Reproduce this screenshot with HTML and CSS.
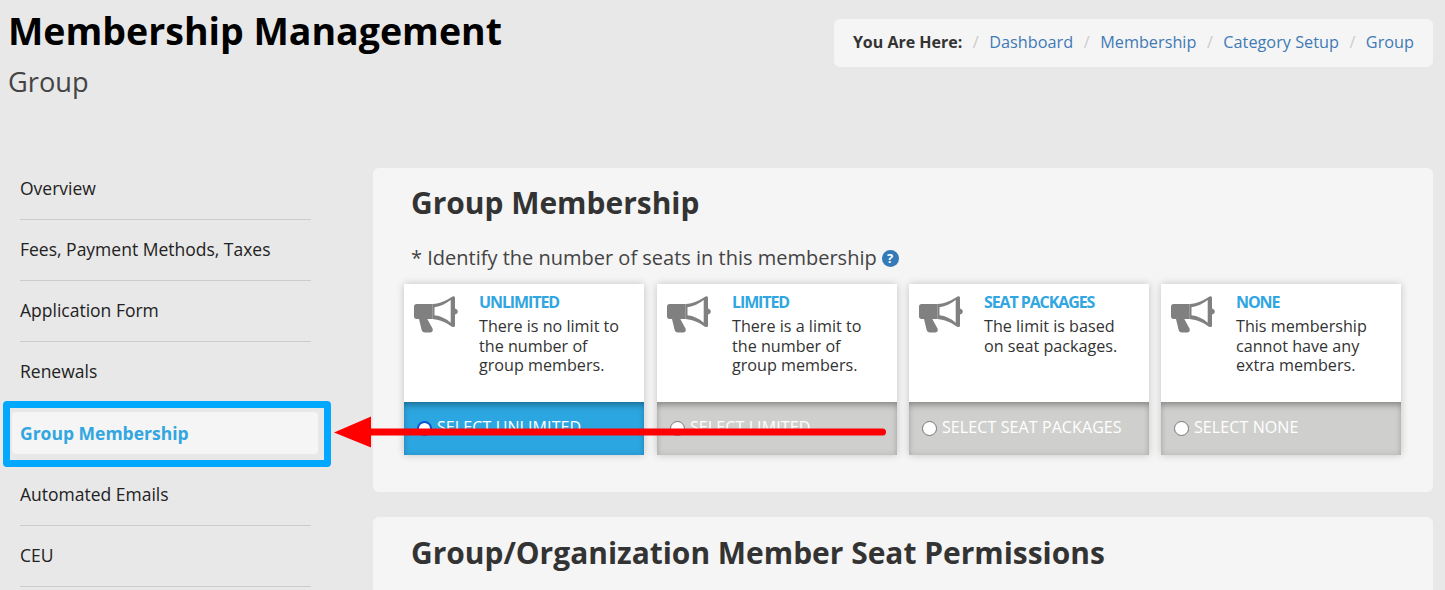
FILE: index.html
```html
<!DOCTYPE html>
<html lang="en">
<head>
  <meta charset="UTF-8">
  <meta name="viewport" content="width=device-width, initial-scale=1.0">
  <title>Membership Management - Group</title>
  <link rel="stylesheet" href="styles.css">
</head>
<body>

  <svg width="0" height="0" class="defs">
    <symbol id="megaphone" viewBox="0 0 44 38">
      <path fill="#808080" d="M2.500 8H18.700V23H13.300L18.500 32.500C19.500 35 18 36.500 15.500 36.500H11C9 36.500 8 35.500 7.500 33.500L5 23H2.500C1 23 0 22 0 20.500V10.500C0 9 1 8 2.500 8z"/>
      <path fill="#808080" fill-rule="evenodd" d="M18.700 8C26 7.500 33 4.500 38 .8C39.500 -.2 41 .3 41 2V12.500C42.800 13 43.800 14 43.800 15.500C43.800 17 42.800 18 41 18.500V29.500C41 31 39.500 31.500 38 30.800C33 27 26 23.800 18.700 23zM20.500 11.300V19.300C26.500 20 32 22.500 36.700 26.700V4C32 7.500 26.500 10.500 20.500 11.300z"/>
    </symbol>
  </svg>

  <header class="page-head">
    <div class="titles">
      <h1>Membership Management</h1>
      <h2>Group</h2>
    </div>
    <nav class="breadcrumb">
      <strong>You Are Here:</strong>
      <span class="sep">/</span><a href="#">Dashboard</a>
      <span class="sep">/</span><a href="#">Membership</a>
      <span class="sep">/</span><a href="#">Category Setup</a>
      <span class="sep">/</span><a href="#">Group</a>
    </nav>
  </header>

  <div class="layout">
    <ul class="side-nav">
      <li><a href="#">Overview</a></li>
      <li><a href="#">Fees, Payment Methods, Taxes</a></li>
      <li><a href="#">Application Form</a></li>
      <li><a href="#">Renewals</a></li>
      <li class="active"><a href="#">Group Membership</a></li>
      <li><a href="#">Automated Emails</a></li>
      <li><a href="#">CEU</a></li>
    </ul>

    <main class="content">
      <section class="panel">
        <h3>Group Membership</h3>
        <p class="question">* Identify the number of seats in this membership
          <span class="help">?</span>
        </p>
        <div class="cards">
          <div class="card selected">
            <div class="card-body">
              <svg class="card-icon"><use href="#megaphone"/></svg>
              <div class="card-text">
                <h4>UNLIMITED</h4>
                <p>There is no limit to the number of group members.</p>
              </div>
            </div>
            <label class="card-foot"><span class="radio"></span>SELECT UNLIMITED</label>
          </div>
          <div class="card">
            <div class="card-body">
              <svg class="card-icon"><use href="#megaphone"/></svg>
              <div class="card-text">
                <h4>LIMITED</h4>
                <p>There is a limit to the number of group members.</p>
              </div>
            </div>
            <label class="card-foot"><span class="radio"></span>SELECT LIMITED</label>
          </div>
          <div class="card">
            <div class="card-body">
              <svg class="card-icon"><use href="#megaphone"/></svg>
              <div class="card-text">
                <h4>SEAT PACKAGES</h4>
                <p>The limit is based on seat packages.</p>
              </div>
            </div>
            <label class="card-foot"><span class="radio"></span>SELECT SEAT PACKAGES</label>
          </div>
          <div class="card">
            <div class="card-body">
              <svg class="card-icon"><use href="#megaphone"/></svg>
              <div class="card-text">
                <h4>NONE</h4>
                <p>This membership cannot have any extra members.</p>
              </div>
            </div>
            <label class="card-foot"><span class="radio"></span>SELECT NONE</label>
          </div>
        </div>
      </section>

      <section class="panel second">
        <h3>Group/Organization Member Seat Permissions</h3>
      </section>
    </main>
  </div>

  <!-- annotation drawn over the screenshot -->
  <div class="callout-box"></div>
  <svg class="callout-arrow" width="560" height="40" viewBox="0 0 560 40">
    <path d="M549.500 18H30" stroke="#f00" stroke-width="7" stroke-linecap="round" fill="none"/>
    <path d="M1 18.500 38 2.500V33.500z" fill="#f00"/>
  </svg>

</body>
</html>
```

FILE: styles.css
```css
* {
  box-sizing: border-box;
}

html, body {
  height: 590px;
  overflow: hidden;
}

body {
  position: relative;
  margin: 0;
  padding: 0 12px 0 8px;
  font-family: "Open Sans", Arial, sans-serif;
  background-color: #e8e8e8;
  color: #333;
}

.defs {
  position: absolute;
}

a {
  text-decoration: none;
}

.page-head {
  display: flex;
  justify-content: space-between;
  align-items: flex-start;
  height: 168px;
}

.titles h1 {
  margin: 5px 0 0;
  font-size: 37.500px;
  line-height: 52px;
  font-weight: 700;
  color: #000;
}

.titles h2 {
  margin: 5px 0 0;
  font-size: 27.200px;
  line-height: 40px;
  font-weight: 400;
  color: #444;
}

.breadcrumb {
  display: flex;
  align-items: center;
  height: 48px;
  margin-top: 19px;
  padding: 0 19px 2px;
  background-color: #f5f5f5;
  border-radius: 6px;
  font-size: 16.250px;
}

.breadcrumb strong {
  font-size: 16px;
  color: #333;
}

.breadcrumb a {
  color: #3f7ab6;
}

.breadcrumb .sep {
  margin: 0 10.500px;
  color: #ccc;
}

.layout {
  display: flex;
  align-items: flex-start;
}

.side-nav {
  flex: none;
  width: 303px;
  margin: -9px 62px 0 0;
  padding: 0 0 0 12px;
  list-style: none;
  font-size: 18px;
}

.side-nav li {
  height: 61px;
  border-bottom: 1px solid #ccc;
}

.side-nav li.active {
  margin: 9px -7px 11px -8px;
  height: 42px;
  background-color: #f5f5f5;
  border-bottom: 0;
  border-radius: 4px;
}

.side-nav a {
  display: block;
  padding-top: 17px;
  line-height: 25px;
  color: #222;
  font-size: 17.500px;
}

.side-nav li.active a {
  padding: 9px 0 0 8px;
  color: #31a6e0;
  font-weight: 700;
}

.content {
  flex: 1;
  min-width: 0;
}

.panel {
  height: 324px;
  padding: 13px 31px 0;
  background-color: #f5f5f5;
  border-radius: 6px;
}

.panel.second {
  height: 200px;
  margin-top: 25px;
  padding-top: 14px;
}

.panel h3 {
  margin: 0 0 0 7px;
  font-size: 29.950px;
  line-height: 44px;
  font-weight: 700;
  color: #333;
}

.question {
  display: flex;
  align-items: center;
  gap: 5px;
  margin: 19px 0 13px 7px;
  font-size: 20px;
  line-height: 27px;
  color: #444;
}

.help {
  display: inline-block;
  width: 17px;
  height: 17px;
  margin-top: 1px;
  border-radius: 50%;
  background-color: #337ab7;
  color: #fff;
  font-size: 13px;
  line-height: 17px;
  font-weight: 700;
  text-align: center;
}

.cards {
  display: flex;
  gap: 12px;
  width: 997px;
}

.card {
  width: 240px;
  height: 171px;
  background-color: #fff;
  box-shadow: 0 0 8px rgba(0, 0, 0, 0.2);
}

.card:first-child {
  margin-right: 1px;
}

.card-body {
  display: flex;
  height: 118px;
  padding: 8px 17px 0 10px;
}

.card-icon {
  flex: none;
  width: 44px;
  height: 38px;
  margin: 4px 21px 0 0;
}

.card-text h4 {
  margin: 0 0 4px;
  font-size: 16px;
  line-height: 21px;
  font-weight: 700;
  letter-spacing: -1.100px;
  color: #31a6e0;
}

.card-text p {
  margin: 0;
  font-size: 16.150px;
  line-height: 19.500px;
  color: #333;
}

.card-foot {
  display: flex;
  align-items: center;
  height: 53px;
  padding: 0 0 4px 13px;
  background-color: #cfd0cd;
  box-shadow: inset 0 6px 7px -3px rgba(0, 0, 0, 0.3), inset 0 0 6px rgba(0, 0, 0, 0.12);
  color: #fff;
  font-size: 16px;
  letter-spacing: 0.100px;
}

.card.selected .card-foot {
  background-color: #2ca6e0;
}

.radio {
  flex: none;
  width: 15px;
  height: 15px;
  margin: 3px 5px 0 0;
  background-color: #fff;
  border: 1px solid #767676;
  border-radius: 50%;
}

.card.selected .radio {
  border: 2px solid #0a56d0;
}

.callout-box {
  position: absolute;
  left: 3px;
  top: 401px;
  width: 328px;
  height: 66px;
  border: 7px solid #00a8ff;
  border-radius: 4px;
}

.callout-arrow {
  position: absolute;
  left: 333px;
  top: 414px;
}
```
